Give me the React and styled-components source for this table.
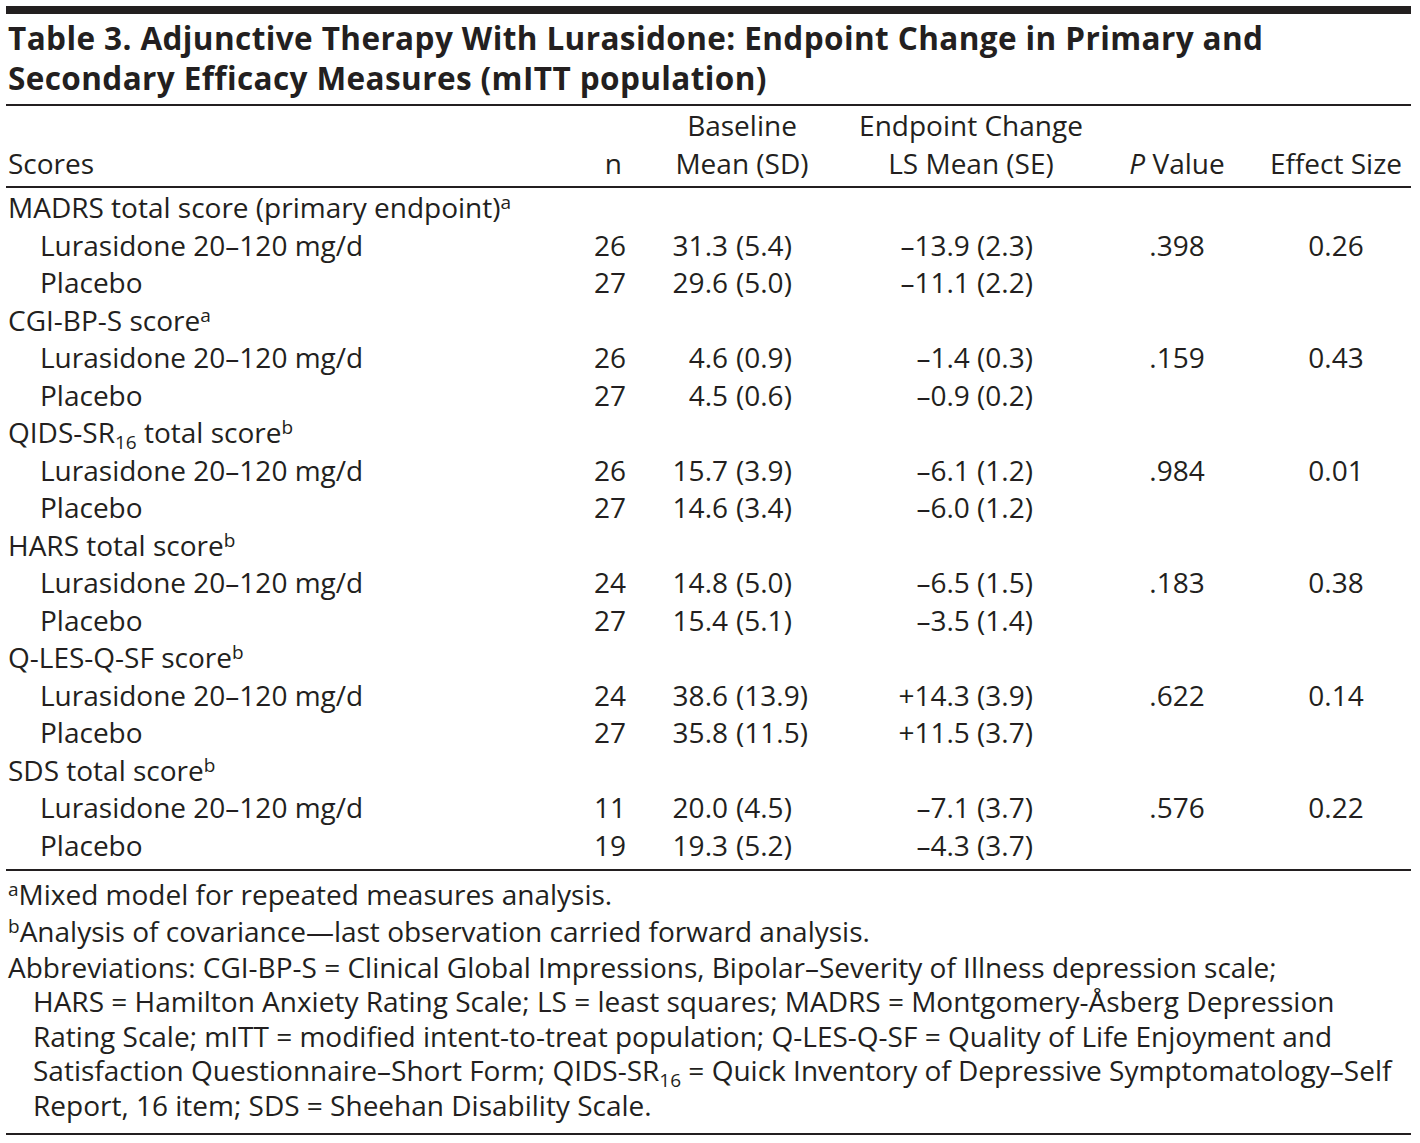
import React from 'react';
import styled, { createGlobalStyle } from 'styled-components';

const GlobalStyle = createGlobalStyle`
  html, body {
    margin: 0;
    padding: 0;
    background: #ffffff;
  }
  body {
    font-family: "Open Sans", "Liberation Sans", sans-serif;
    color: #231f20;
  }
`;

const INK = '#231f20';

const TableWrap = styled.div`
  width: 1405px;
  margin-left: 6px;
  padding-top: 6px;
`;

const TopRule = styled.div`
  height: 8px;
  background: ${INK};
`;

const Rule = styled.div`
  height: 2px;
  background: ${INK};
  margin-top: ${(p) => p.$top || 0}px;
`;

const Title = styled.h1`
  margin: 4px 0 6px 2px;
  font-size: 31.5px;
  font-weight: 700;
  letter-spacing: 0.4px;
  line-height: 40px;
  white-space: nowrap;
`;

const Grid = styled.div`
  display: grid;
  grid-template-columns: 552px 70px 224px 234px 178px 140px;
  margin-left: 2px;
  font-size: 28px;
  line-height: 37.5px;
`;

const HeadRow = styled(Grid)`
  align-items: end;
  margin-top: 1.4px;
  margin-bottom: 3.6px;
`;

const HeadCell = styled.div`
  text-align: ${(p) => p.$align || 'center'};
  padding-right: ${(p) => p.$padRight || 0}px;
  white-space: nowrap;
`;

const Body = styled.div`
  margin-top: 1.4px;
  margin-bottom: 4.6px;
`;

const Label = styled.div`
  padding-left: ${(p) => (p.$sub ? 32 : 0)}px;
  white-space: nowrap;
`;

const NCell = styled.div`
  text-align: right;
  padding-right: 4px;
`;

const MeanCell = styled.div`
  display: grid;
  grid-template-columns: 98px auto;
  column-gap: 8px;
  white-space: nowrap;

  & > span:first-child {
    text-align: right;
  }
`;

const ChangeCell = styled.div`
  text-align: right;
  padding-right: 55px;
  white-space: nowrap;
`;

const CenterCell = styled.div`
  text-align: center;
`;

const Sup = styled.sup`
  font-size: 19px;
  line-height: 0;
  vertical-align: 9px;
`;

const Sub = styled.sub`
  font-size: 19px;
  line-height: 0;
  vertical-align: -6px;
`;

const Notes = styled.div`
  margin: 4.6px 0 0 2px;
  font-size: 28px;
  line-height: 37px;
`;

const NoteLine = styled.div`
  white-space: nowrap;
  padding-left: ${(p) => (p.$indent ? 25 : 0)}px;
  line-height: ${(p) => (p.$tight ? 34.6 : 37)}px;
`;

const groups = [
  {
    label: <>MADRS total score (primary endpoint)<Sup>a</Sup></>,
    rows: [
      ['Lurasidone 20–120 mg/d', 26, '31.3', '(5.4)', '–13.9 (2.3)', '.398', '0.26'],
      ['Placebo', 27, '29.6', '(5.0)', '–11.1 (2.2)', '', ''],
    ],
  },
  {
    label: <>CGI-BP-S score<Sup>a</Sup></>,
    rows: [
      ['Lurasidone 20–120 mg/d', 26, '4.6', '(0.9)', '–1.4 (0.3)', '.159', '0.43'],
      ['Placebo', 27, '4.5', '(0.6)', '–0.9 (0.2)', '', ''],
    ],
  },
  {
    label: <>QIDS-SR<Sub>16</Sub> total score<Sup>b</Sup></>,
    rows: [
      ['Lurasidone 20–120 mg/d', 26, '15.7', '(3.9)', '–6.1 (1.2)', '.984', '0.01'],
      ['Placebo', 27, '14.6', '(3.4)', '–6.0 (1.2)', '', ''],
    ],
  },
  {
    label: <>HARS total score<Sup>b</Sup></>,
    rows: [
      ['Lurasidone 20–120 mg/d', 24, '14.8', '(5.0)', '–6.5 (1.5)', '.183', '0.38'],
      ['Placebo', 27, '15.4', '(5.1)', '–3.5 (1.4)', '', ''],
    ],
  },
  {
    label: <>Q-LES-Q-SF score<Sup>b</Sup></>,
    rows: [
      ['Lurasidone 20–120 mg/d', 24, '38.6', '(13.9)', '+14.3 (3.9)', '.622', '0.14'],
      ['Placebo', 27, '35.8', '(11.5)', '+11.5 (3.7)', '', ''],
    ],
  },
  {
    label: <>SDS total score<Sup>b</Sup></>,
    rows: [
      ['Lurasidone 20–120 mg/d', 11, '20.0', '(4.5)', '–7.1 (3.7)', '.576', '0.22'],
      ['Placebo', 19, '19.3', '(5.2)', '–4.3 (3.7)', '', ''],
    ],
  },
];

function DataRow({ row }) {
  const [name, n, mean, sd, change, p, effect] = row;
  return (
    <Grid>
      <Label $sub>{name}</Label>
      <NCell>{n}</NCell>
      <MeanCell>
        <span>{mean}</span>
        <span>{sd}</span>
      </MeanCell>
      <ChangeCell>{change}</ChangeCell>
      <CenterCell>{p}</CenterCell>
      <CenterCell>{effect}</CenterCell>
    </Grid>
  );
}

export default function App() {
  return (
    <>
      <GlobalStyle />
      <TableWrap>
        <TopRule />
        <Title>
          Table 3. Adjunctive Therapy With Lurasidone: Endpoint Change in Primary and
          <br />
          Secondary Efficacy Measures (mITT population)
        </Title>
        <Rule />
        <HeadRow>
          <HeadCell $align="left">Scores</HeadCell>
          <HeadCell $align="right" $padRight={8}>n</HeadCell>
          <HeadCell>Baseline<br />Mean (SD)</HeadCell>
          <HeadCell>Endpoint Change<br />LS Mean (SE)</HeadCell>
          <HeadCell><i>P</i> Value</HeadCell>
          <HeadCell>Effect Size</HeadCell>
        </HeadRow>
        <Rule />
        <Body>
          {groups.map((g, gi) => (
            <React.Fragment key={gi}>
              <Grid>
                <Label>{g.label}</Label>
              </Grid>
              {g.rows.map((r, ri) => (
                <DataRow key={ri} row={r} />
              ))}
            </React.Fragment>
          ))}
        </Body>
        <Rule />
        <Notes>
          <NoteLine><Sup>a</Sup>Mixed model for repeated measures analysis.</NoteLine>
          <NoteLine><Sup>b</Sup>Analysis of covariance—last observation carried forward analysis.</NoteLine>
          <NoteLine $tight>
            Abbreviations: CGI-BP-S = Clinical Global Impressions, Bipolar–Severity of Illness depression scale;
          </NoteLine>
          <NoteLine $indent $tight>
            HARS = Hamilton Anxiety Rating Scale; LS = least squares; MADRS = Montgomery-Åsberg Depression
          </NoteLine>
          <NoteLine $indent $tight>
            Rating Scale; mITT = modified intent-to-treat population; Q-LES-Q-SF = Quality of Life Enjoyment and
          </NoteLine>
          <NoteLine $indent $tight>
            Satisfaction Questionnaire–Short Form; QIDS-SR<Sub>16</Sub> = Quick Inventory of Depressive Symptomatology–Self
          </NoteLine>
          <NoteLine $indent $tight>
            Report, 16 item; SDS = Sheehan Disability Scale.
          </NoteLine>
        </Notes>
        <Rule $top={10} />
      </TableWrap>
    </>
  );
}
